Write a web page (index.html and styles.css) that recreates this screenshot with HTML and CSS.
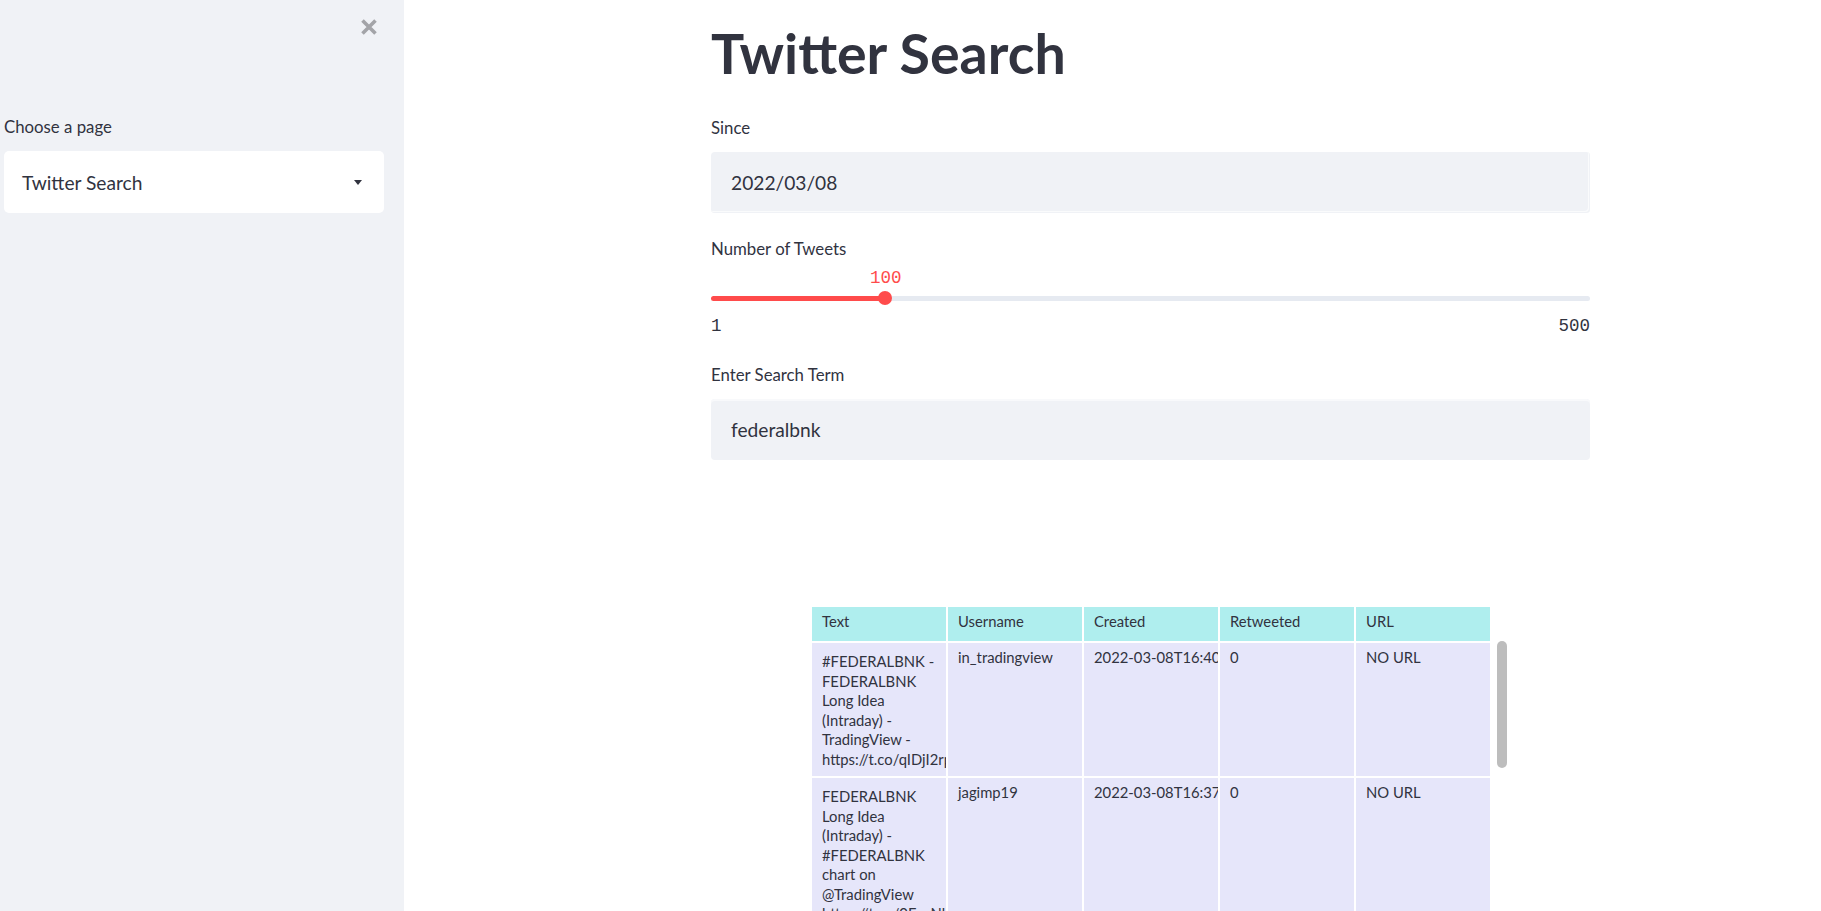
FILE: index.html
```html
<!DOCTYPE html>
<html lang="en">
<head>
<meta charset="utf-8">
<title>Twitter Search</title>
<link rel="stylesheet" href="styles.css">
</head>
<body>
<aside class="sidebar">
  <div class="sidebar-head">
    <svg class="close-icon" width="18" height="18" viewBox="0 0 18 18" aria-hidden="true">
      <path d="M2.5 2.5 L15.5 15.5 M15.5 2.5 L2.5 15.5" stroke="#a3a4a8" stroke-width="3.6" fill="none"/>
    </svg>
  </div>
  <div class="label">Choose a page</div>
  <div class="select">
    <span>Twitter Search</span>
    <span class="caret"></span>
  </div>
</aside>
<main class="main">
  <div class="block">
    <h1 class="title">Twitter Search</h1>

    <div class="field field-since">
      <div class="label">Since</div>
      <div class="input input-date">2022/03/08</div>
    </div>

    <div class="field field-slider">
      <div class="label">Number of Tweets</div>
      <div class="slider-value"><span style="margin-left: calc(19.84% - 15.5px)">100</span></div>
      <div class="track">
        <div class="fill" style="width: 19.84%"></div>
        <div class="thumb"></div>
        <div class="rest"></div>
      </div>
      <div class="ticks"><span>1</span><span>500</span></div>
    </div>

    <div class="field field-term">
      <div class="label">Enter Search Term</div>
      <div class="input input-term">federalbnk</div>
    </div>

    <div class="table-wrap">
      <div class="table">
        <div class="cell head">Text</div>
        <div class="cell head">Username</div>
        <div class="cell head">Created</div>
        <div class="cell head">Retweeted</div>
        <div class="cell head">URL</div>

        <div class="cell text-cell">#FEDERALBNK -<br>FEDERALBNK<br>Long Idea<br>(Intraday) -<br>TradingView -<br>https://t.co/qIDjI2rpVx</div>
        <div class="cell">in_tradingview</div>
        <div class="cell">2022-03-08T16:40:03</div>
        <div class="cell">0</div>
        <div class="cell">NO URL</div>

        <div class="cell text-cell">FEDERALBNK<br>Long Idea<br>(Intraday) -<br>#FEDERALBNK<br>chart on<br>@TradingView<br>https://t.co/0FzuNbWq2k</div>
        <div class="cell">jagimp19</div>
        <div class="cell">2022-03-08T16:37:06</div>
        <div class="cell">0</div>
        <div class="cell">NO URL</div>
      </div>
      <div class="scroll-gutter"><div class="scroll-thumb"></div></div>
    </div>
  </div>
</main>
</body>
</html>
```
FILE: styles.css
```css
html, body {
  margin: 0;
  height: 911px;
  overflow: hidden;
}

body {
  display: flex;
  font-family: Lato, "Noto Sans", sans-serif;
  color: #31333f;
  background: #ffffff;
}

/* Sidebar */
.sidebar {
  width: 404px;
  flex: none;
  box-sizing: border-box;
  background: #f0f2f6;
  padding: 0 20px 0 4px;
}

.sidebar-head {
  box-sizing: border-box;
  height: 116.5px;
  display: flex;
  justify-content: flex-end;
  align-items: flex-start;
  padding: 18px 6px 0 0;
}

.close-icon {
  display: block;
}

.label {
  font-size: 16.8px;
  line-height: 20px;
  height: 20px;
  margin-bottom: 14.5px;
  white-space: nowrap;
}

.select {
  height: 62px;
  box-sizing: border-box;
  background: #ffffff;
  border-radius: 5px;
  display: flex;
  align-items: center;
  justify-content: space-between;
  padding: 0 22px 0 18px;
  font-size: 19.2px;
}

.caret {
  width: 0;
  height: 0;
  border-left: 4.5px solid transparent;
  border-right: 4.5px solid transparent;
  border-top: 5px solid #31333f;
}

/* Main */
.main {
  flex: 1;
  padding-left: 307px;
}

.block {
  width: 879px;
}

.title {
  margin: 0;
  padding-top: 19.5px;
  font-size: 55.5px;
  line-height: 66px;
  font-weight: 700;
  color: #31333f;
  white-space: nowrap;
}

.field {
  display: flex;
  flex-direction: column;
}

.field-since {
  margin-top: 32px;
}

.field-slider {
  margin-top: 25.5px;
}

.field-term {
  margin-top: 29.8px;
}

.input {
  height: 61px;
  box-sizing: border-box;
  background: #f0f2f6;
  border-radius: 4px;
  display: flex;
  align-items: center;
  padding-left: 20px;
  font-size: 19.2px;
}

.input-date {
  box-shadow: inset -1px -1px 0 #f0f2f6, inset -2px -2px 0 #fafbfc;
}

.input-term {
  box-shadow: inset 0 2px 0 #f8f9fb;
}

/* Slider */
.field-slider .label {
  margin-bottom: 0;
}

.slider-value {
  margin-top: 11.5px;
  height: 17px;
  font-family: "Liberation Mono", monospace;
  font-size: 17.5px;
  line-height: 17px;
  color: #ff4b4b;
  white-space: nowrap;
}

.track {
  margin-top: 4px;
  height: 14px;
  display: flex;
  align-items: center;
}

.fill {
  height: 5px;
  background: #ff4b4b;
  border-radius: 3px 0 0 3px;
}

.thumb {
  flex: none;
  width: 14px;
  height: 14px;
  border-radius: 50%;
  background: #ff4b4b;
  margin: 0 -7px;
  position: relative;
  z-index: 1;
}

.rest {
  flex: 1;
  height: 5px;
  background: #e6eaf1;
  border-radius: 0 3px 3px 0;
}

.ticks {
  margin-top: 13px;
  height: 17px;
  display: flex;
  justify-content: space-between;
  font-family: "Liberation Mono", monospace;
  font-size: 17.5px;
  line-height: 17px;
  color: #31333f;
}

/* Table */
.table-wrap {
  margin-top: 147px;
  margin-left: 101px;
  display: flex;
  align-items: flex-start;
}

.table {
  width: 678px;
  display: grid;
  grid-template-columns: repeat(5, 134px);
  grid-template-rows: 34px 133px auto;
  gap: 2px;
  background: #ffffff;
  font-size: 14.8px;
  line-height: 19.5px;
}

.cell {
  background: #e6e6fa;
  padding: 5px 10px 0 10px;
  overflow: hidden;
  white-space: nowrap;
}

.cell.head {
  background: #afeeee;
}

.cell.text-cell {
  padding-top: 9px;
}

.scroll-gutter {
  margin-left: 7px;
  width: 10px;
  padding-top: 34px;
}

.scroll-thumb {
  width: 10px;
  height: 127px;
  border-radius: 5px;
  background: #bdbdbd;
}
```
